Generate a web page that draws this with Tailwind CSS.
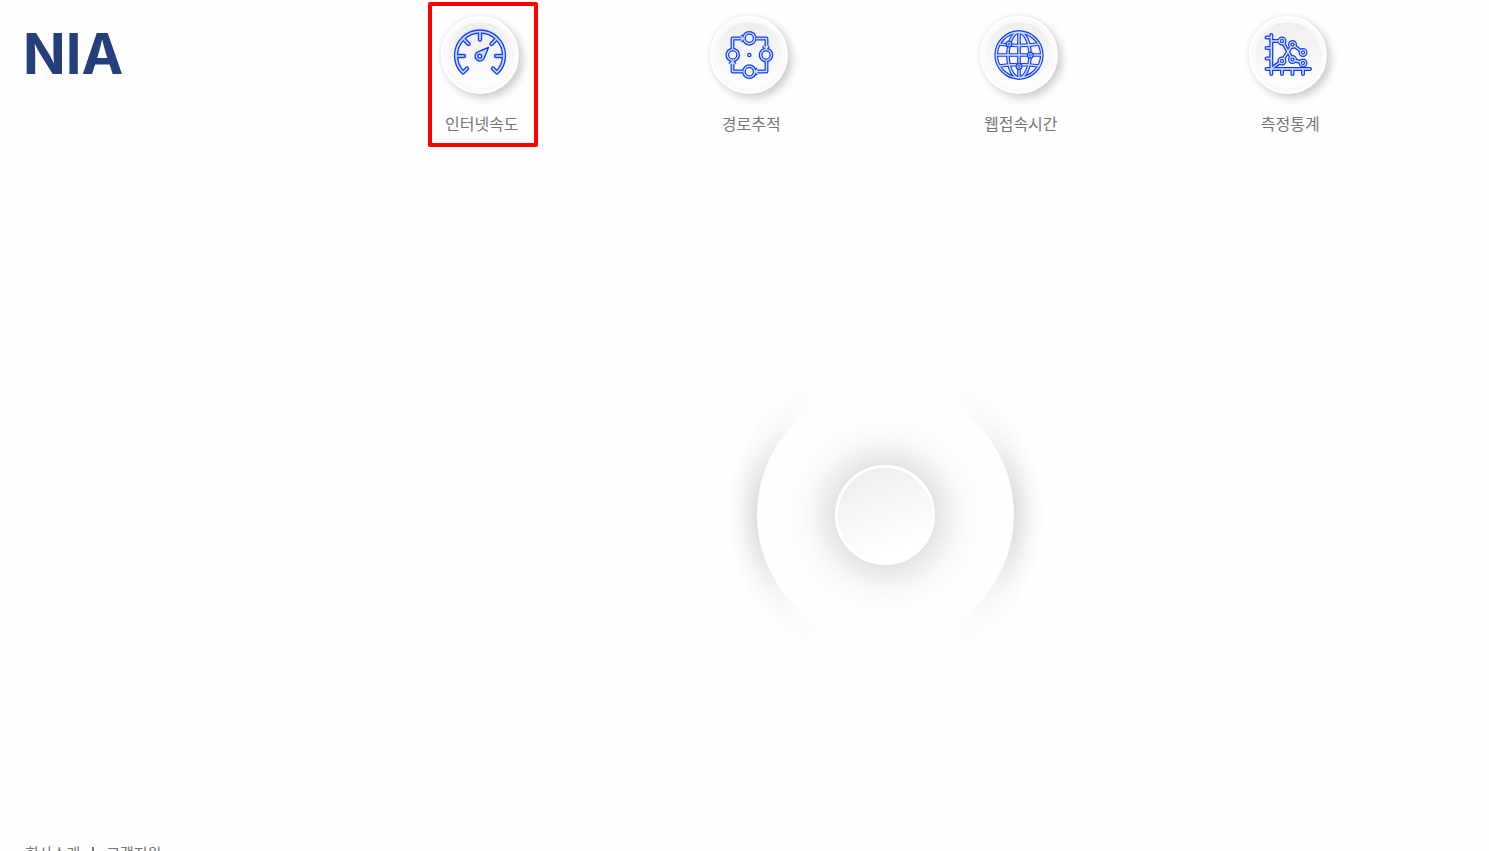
<!DOCTYPE html>
<html lang="ko">
<head>
  <meta charset="UTF-8" />
  <meta name="viewport" content="width=device-width, initial-scale=1.0" />
  <title>NIA 인터넷 품질측정</title>
  <script src="https://cdn.jsdelivr.net/npm/@tailwindcss/browser@4"></script>
</head>
<body class="h-screen overflow-hidden bg-[#fefefe] text-[#777] font-['Noto_Sans_CJK_KR',sans-serif]">

<!-- Header -->
<header class="flex">
  <div class="w-[345px] shrink-0 pl-[23px] pt-6">
    <a href="#" class="block font-['Inter',sans-serif] text-[56px] leading-[60px] font-bold text-[#253e7c]">NIA</a>
  </div>

  <nav class="grid flex-1 grid-cols-4 pt-4 mr-[66px]">
    <a href="#speed" class="relative flex flex-col items-center">
      <span class="flex size-[78px] items-center justify-center rounded-full border-2 border-white bg-[#fafafa] shadow-[4px_4px_8px_rgba(0,0,0,0.2),-2px_-2px_5px_rgba(0,0,0,0.04)]">
        <span class="flex size-[66px] items-center justify-center rounded-full bg-linear-to-b from-[#eeeeee] to-white">
          <svg class="size-[60px] shrink-0" viewBox="0 0 60 60" fill="none" stroke-linecap="round" stroke-linejoin="round" aria-hidden="true">
            <defs>
              <g id="gauge">
                <path d="M17 43.500L13 47.500C8.500 43 6 37 6 30.500A24 24 0 0 1 54 30.500C54 37 51.500 43 47 47.500L43 43.500" />
                <path d="M7 31h7M53 31h-7M30 7.500v7M14 14.500l4.500 4.500M46 14.500l-4.500 4.500" />
              </g>
            </defs>
            <use href="#gauge" stroke="#143cff" stroke-width="4.400" />
            <use href="#gauge" stroke="#cbdfff" stroke-width="1.700" />
            <path d="M38.500 22.500L27.800 26.800A4.800 4.800 0 1 0 34.200 33.200Z" fill="#cbdfff" stroke="#143cff" stroke-width="1.400" />
            <circle cx="29.800" cy="31.200" r="1.900" fill="#fff" stroke="#143cff" stroke-width="1.400" />
          </svg>
        </span>
      </span>
      <span class="mt-[17px] pl-1 text-base leading-6">인터넷속도</span>
      <span class="absolute -top-[14px] left-1/2 h-[145px] w-[110px] -translate-x-[52px] rounded-xs border-4 border-[#fe0000]"></span>
    </a>

    <a href="#trace" class="flex flex-col items-center">
      <span class="flex size-[78px] items-center justify-center rounded-full border-2 border-white bg-[#fafafa] shadow-[4px_4px_8px_rgba(0,0,0,0.2),-2px_-2px_5px_rgba(0,0,0,0.04)]">
        <span class="flex size-[66px] items-center justify-center rounded-full bg-linear-to-b from-[#eeeeee] to-white">
          <svg class="size-[60px] shrink-0" viewBox="0 0 60 60" fill="none" stroke-linejoin="round" aria-hidden="true">
            <defs>
              <g id="route">
                <path d="M13.500 24V13.500H24M37 13.500H47.500V24M47.500 36V46.500H37M24 46.500H13.500V36" />
                <path d="M21.500 11L24.500 13.500L21.500 16M44.500 20.500L47 23.500L49.500 20.500M39 44L36 46.500L39 49M11 39.500L13.500 36.500L16 39.500" />
                <circle cx="30.300" cy="13.300" r="5.400" />
                <circle cx="47" cy="30" r="5.400" />
                <circle cx="30.300" cy="46.700" r="5.400" />
                <circle cx="13.700" cy="30" r="5.400" />
              </g>
            </defs>
            <use href="#route" stroke="#143cff" stroke-width="3.900" />
            <use href="#route" stroke="#cbdfff" stroke-width="1.400" />
            <circle cx="30.300" cy="30" r="1.600" fill="#fff" stroke="#143cff" stroke-width="1.400" />
          </svg>
        </span>
      </span>
      <span class="mt-[17px] pl-1 text-base leading-6">경로추적</span>
    </a>

    <a href="#web" class="flex flex-col items-center">
      <span class="flex size-[78px] items-center justify-center rounded-full border-2 border-white bg-[#fafafa] shadow-[4px_4px_8px_rgba(0,0,0,0.2),-2px_-2px_5px_rgba(0,0,0,0.04)]">
        <span class="flex size-[66px] items-center justify-center rounded-full bg-linear-to-b from-[#eeeeee] to-white">
          <svg class="size-[60px] shrink-0" viewBox="0 0 60 60" fill="none" aria-hidden="true">
            <defs>
              <g id="globe">
                <circle cx="30" cy="30" r="22.800" />
                <ellipse cx="30" cy="30" rx="11" ry="22.800" />
                <path d="M30 7V53M7 30H53M10 19Q30 22 50 19M10 41Q30 38 50 41" />
              </g>
            </defs>
            <use href="#globe" stroke="#143cff" stroke-width="3.700" />
            <use href="#globe" stroke="#cbdfff" stroke-width="1.400" />
            <g fill="#cbdfff" stroke="#143cff" stroke-width="1.200">
              <circle cx="20" cy="19" r="2.900" />
              <circle cx="41.300" cy="30.300" r="2.900" />
              <circle cx="30" cy="41.500" r="2.900" />
            </g>
            <g fill="#fff" stroke="#143cff">
              <circle cx="20" cy="19" r="1" />
              <circle cx="41.300" cy="30.300" r="1" />
              <circle cx="30" cy="41.500" r="1" />
            </g>
          </svg>
        </span>
      </span>
      <span class="mt-[17px] pl-1 text-base leading-6">웹접속시간</span>
    </a>

    <a href="#stats" class="flex flex-col items-center">
      <span class="flex size-[78px] items-center justify-center rounded-full border-2 border-white bg-[#fafafa] shadow-[4px_4px_8px_rgba(0,0,0,0.2),-2px_-2px_5px_rgba(0,0,0,0.04)]">
        <span class="flex size-[66px] items-center justify-center rounded-full bg-linear-to-b from-[#eeeeee] to-white">
          <svg class="size-[60px] shrink-0" viewBox="0 0 60 60" fill="none" stroke-linecap="round" stroke-linejoin="round" aria-hidden="true">
            <defs>
              <g id="chart">
                <path d="M13.300 10V49M8.500 44H52" />
                <path d="M8.500 12.500H13M8.500 23H13M8.500 33.500H13M24 44V49M34.500 44V49M45 44V49" />
                <path d="M13.500 16H24L34.500 34.500L45 38M13.500 43.500L24 36L34.500 19.500L45 27.500" />
                <circle cx="24" cy="16" r="2.500" />
                <circle cx="34.500" cy="19.500" r="2.500" />
                <circle cx="45" cy="27.500" r="2.500" />
                <circle cx="24" cy="36" r="2.500" />
                <circle cx="34.500" cy="34.500" r="2.500" />
                <circle cx="45" cy="38" r="2.500" />
              </g>
            </defs>
            <use href="#chart" stroke="#143cff" stroke-width="4" />
            <use href="#chart" stroke="#cbdfff" stroke-width="1.500" />
            <g fill="#fff" stroke="#143cff" stroke-width="1.200">
              <circle cx="24" cy="16" r="1.500" />
              <circle cx="34.500" cy="19.500" r="1.500" />
              <circle cx="45" cy="27.500" r="1.500" />
              <circle cx="24" cy="36" r="1.500" />
              <circle cx="34.500" cy="34.500" r="1.500" />
              <circle cx="45" cy="38" r="1.500" />
            </g>
          </svg>
        </span>
      </span>
      <span class="mt-[17px] pl-1 text-base leading-6">측정통계</span>
    </a>
  </nav>
</header>

<!-- Start button -->
<main class="flex justify-center pt-[251px] pb-[198px] pl-[347px] pr-[66px]">
  <div class="flex size-[257px] items-center justify-center rounded-full bg-[#fefefe] shadow-[0_-50px_30px_-12px_#fefefe,0_50px_30px_-12px_#fefefe,12px_0_30px_-10px_rgba(0,0,0,0.2),-12px_0_30px_-10px_rgba(0,0,0,0.2),0_0_40px_rgba(0,0,0,0.06)]">
    <button type="button" aria-label="측정 시작" class="size-[100px] rounded-full border-3 border-white bg-linear-160 from-[#ececec] to-white to-80% shadow-[0_0_50px_rgba(0,0,0,0.26)]"></button>
  </div>
</main>

<!-- Footer -->
<footer class="flex items-center gap-3 px-[25px] text-[15px] leading-6">
  <a href="#about">회사소개</a>
  <span class="h-3 w-[2px] bg-[#777]"></span>
  <a href="#support">고객지원</a>
</footer>

</body>
</html>
